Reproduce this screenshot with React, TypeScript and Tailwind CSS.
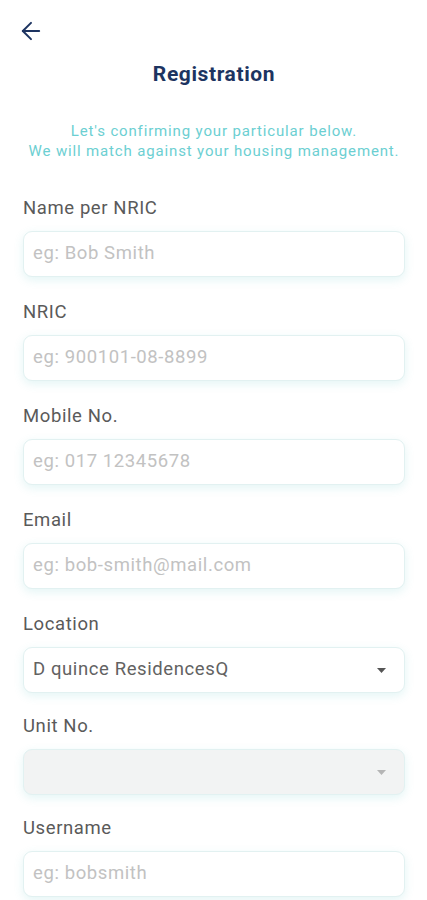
import { ArrowLeft } from "lucide-react";

type Field = {
  label: string;
  placeholder?: string;
  value?: string;
  select?: boolean;
  disabled?: boolean;
};

const fields: Field[] = [
  { label: "Name per NRIC", placeholder: "eg: Bob Smith" },
  { label: "NRIC", placeholder: "eg: 900101-08-8899" },
  { label: "Mobile No.", placeholder: "eg: 017 12345678" },
  { label: "Email", placeholder: "eg: bob-smith@mail.com" },
  { label: "Location", value: "D quince ResidencesQ", select: true },
  { label: "Unit No.", select: true, disabled: true },
  { label: "Username", placeholder: "eg: bobsmith" },
];

function Caret({ muted }: { muted?: boolean }) {
  return (
    <svg width="9" height="5" viewBox="0 0 9 5" className="shrink-0">
      <path d="M0 0h9L4.5 5z" fill={muted ? "#b5b5b5" : "#555555"} />
    </svg>
  );
}

function FormField({ field }: { field: Field }) {
  return (
    <div className={field.select ? "mb-[21px]" : "mb-[23px]"}>
      <label className="block text-[18.5px] leading-[24px] tracking-[0.6px] text-[#5a5a5a] mb-[11px]">
        {field.label}
      </label>
      <div
        className={`h-[46px] rounded-[9px] border border-[#e2f1f1] flex items-center pl-[9px] pr-[18px] shadow-[0_3px_10px_rgba(80,190,190,0.16)] ${
          field.disabled ? "bg-[#f2f3f3]" : "bg-white"
        }`}
      >
        {field.select ? (
          <>
            <span className="flex-1 text-[18.5px] tracking-[0.6px] text-[#626262]">
              {field.value}
            </span>
            <Caret muted={field.disabled} />
          </>
        ) : (
          <input
            className="w-full bg-transparent outline-none text-[18.5px] tracking-[0.6px] text-[#444] placeholder:text-[#c2c2c2]"
            placeholder={field.placeholder}
          />
        )}
      </div>
    </div>
  );
}

export default function App() {
  return (
    <div
      className="min-h-[900px] bg-white px-[23px] pr-[22px] overflow-hidden"
      style={{ fontFamily: "Roboto, 'Liberation Sans', sans-serif" }}
    >
      <div className="pt-[17px] -ml-[6px]">
        <ArrowLeft size={28} strokeWidth={1.7} color="#1d3461" />
      </div>
      <h1 className="mt-[15px] text-center text-[21px] leading-[28px] tracking-[0.6px] font-bold text-[#1d3461]">
        Registration
      </h1>
      <p className="mt-[33px] text-center text-[15px] leading-[20px] tracking-[0.85px] text-[#6ccfd2] whitespace-nowrap">
        Let's confirming your particular below.
        <br />
        We will match against your housing management.
      </p>
      <form className="mt-[35px]">
        {fields.map((f) => (
          <FormField key={f.label} field={f} />
        ))}
      </form>
    </div>
  );
}
